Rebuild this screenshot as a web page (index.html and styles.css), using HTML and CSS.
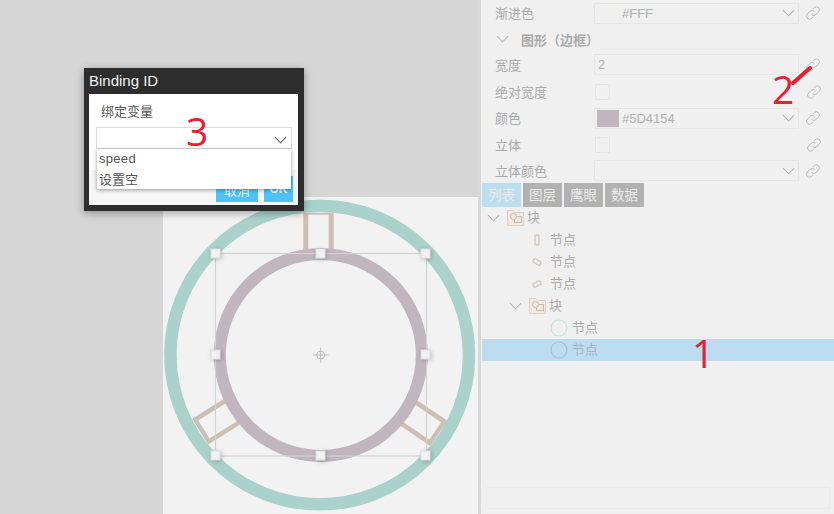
FILE: index.html
```html
<!DOCTYPE html>
<html lang="zh">
<head>
<meta charset="utf-8">
<title>Binding ID</title>
<link rel="stylesheet" href="styles.css">
</head>
<body>
<svg class="defs" width="0" height="0" aria-hidden="true">
  <symbol id="chain" viewBox="0 0 16 16"><path d="M6.6 9.6a3 3 0 0 0 4.300 0l2.600-2.600a3 3 0 0 0-4.300-4.300L8 3.900M9.400 6.400a3 3 0 0 0-4.300 0L2.500 9a3 3 0 0 0 4.300 4.300L8 12.100" fill="none" stroke="currentColor" stroke-width="1"/></symbol>
  <symbol id="chev" viewBox="0 0 14 8"><path d="M1 1l6 6 6-6" fill="none" stroke="currentColor" stroke-width="1.100"/></symbol>
  <symbol id="folder" viewBox="0 0 17 16"><path d="M.5.5h6l2 2h8v13H.5z" fill="#f1e9e2" stroke="#ddd1c6"/><rect x="7.500" y="6.500" width="7" height="6" fill="none" stroke="#c9bdb2"/><circle cx="6.500" cy="6.500" r="3" fill="#f1e9e2" stroke="#c9bdb2"/></symbol>
</svg>
<main class="app">
  <section class="stage">
    <div class="canvas">
      <svg class="drawing" width="315" height="317" viewBox="0 0 315 317">
        <g fill="#cdbfb3">
          <path d="M140.300 70V15.700h30.400V70h-5V17.700h-20.400V70z"/>
          <path d="M140.300 70V15.700h30.400V70h-4.600V20h-21.200V70z" transform="rotate(124 157 158)"/>
          <path d="M140.300 70V15.700h30.400V70h-4.600V20h-21.200V70z" transform="rotate(-122 157 158)"/>
        </g>
        <circle cx="156.700" cy="158" r="149.300" fill="none" stroke="#aad1cb" stroke-width="12.500"/>
        <circle cx="157.800" cy="158" r="101" fill="#f2f2f2" stroke="#c1b6bd" stroke-width="12"/>
        <rect x="52.500" y="56.500" width="211" height="202.500" fill="none" stroke="#d3d3d3" stroke-width="1.200"/>
        <g class="handles" fill="#f1f1f1" stroke="#dedede">
          <rect x="48" y="52" width="9" height="9"/>
          <rect x="153" y="52" width="9" height="9"/>
          <rect x="258" y="52" width="9" height="9"/>
          <rect x="48" y="153" width="9" height="9"/>
          <rect x="258" y="153" width="9" height="9"/>
          <rect x="48" y="254" width="9" height="9"/>
          <rect x="153" y="254" width="9" height="9"/>
          <rect x="258" y="254" width="9" height="9"/>
        </g>
        <g fill="none" stroke="#b9b9b9">
          <circle cx="157.700" cy="158" r="4"/>
          <path d="M150 158h15.500M157.700 150.500v15"/>
        </g>
      </svg>
    </div>

    <div class="dialog">
      <h2 class="dialog-title">Binding ID</h2>
      <div class="dialog-body">
        <div class="dialog-main">
          <div class="dialog-label">绑定变量</div>
          <div class="dialog-select"><svg class="chev-dark" width="13" height="8"><use href="#chev"/></svg></div>
        </div>
        <div class="dialog-foot">
          <button class="btn btn-cancel">取消</button>
          <button class="btn btn-ok">OK</button>
        </div>
        <ul class="dropdown">
          <li>speed</li>
          <li>设置空</li>
        </ul>
      </div>
    </div>
    <span class="mark mark-3">3</span>
  </section>

  <aside class="panel">
    <div class="props">
      <div class="row">
        <label>渐进色</label>
        <div class="field"><span class="swatch"></span><span>#FFF</span><svg class="chev" width="13" height="8"><use href="#chev"/></svg></div>
        <svg class="chain" width="16" height="16"><use href="#chain"/></svg>
      </div>
      <div class="row section">
        <svg class="chev" width="13" height="8"><use href="#chev"/></svg>
        <strong>图形（边框）</strong>
      </div>
      <div class="row row-width">
        <label>宽度</label>
        <div class="field field-text">2</div>
        <svg class="chain" width="16" height="16"><use href="#chain"/></svg>
      </div>
      <div class="row">
        <label>绝对宽度</label>
        <div class="check"></div>
        <svg class="chain" width="16" height="16"><use href="#chain"/></svg>
      </div>
      <div class="row">
        <label>颜色</label>
        <div class="field"><span class="swatch swatch-fill"></span><span>#5D4154</span><svg class="chev" width="13" height="8"><use href="#chev"/></svg></div>
        <svg class="chain" width="16" height="16"><use href="#chain"/></svg>
      </div>
      <div class="row">
        <label>立体</label>
        <div class="check"></div>
        <svg class="chain" width="16" height="16"><use href="#chain"/></svg>
      </div>
      <div class="row">
        <label>立体颜色</label>
        <div class="field"><svg class="chev" width="13" height="8"><use href="#chev"/></svg></div>
        <svg class="chain" width="16" height="16"><use href="#chain"/></svg>
      </div>
    </div>

    <nav class="tabs">
      <span class="tab tab-active">列表</span>
      <span class="tab">图层</span>
      <span class="tab">鹰眼</span>
      <span class="tab">数据</span>
    </nav>

    <ul class="tree">
      <li class="node lvl0"><svg class="chev tw" width="13" height="8"><use href="#chev"/></svg><svg class="fold" width="17" height="16"><use href="#folder"/></svg><span>块</span></li>
      <li class="node lvl1"><svg class="glyph" width="16" height="16" viewBox="0 0 16 16"><rect x="6" y="3" width="4" height="10" rx="1" fill="none" stroke="#d2c3b6" stroke-width="1.300"/></svg><span>节点</span></li>
      <li class="node lvl1"><svg class="glyph" width="16" height="16" viewBox="0 0 16 16"><rect x="6" y="4" width="4" height="8" rx="1" transform="rotate(-60 8 8)" fill="none" stroke="#d2c3b6" stroke-width="1.300"/></svg><span>节点</span></li>
      <li class="node lvl1"><svg class="glyph" width="16" height="16" viewBox="0 0 16 16"><rect x="6" y="4" width="4" height="8" rx="1" transform="rotate(60 8 8)" fill="none" stroke="#d2c3b6" stroke-width="1.300"/></svg><span>节点</span></li>
      <li class="node lvl2"><svg class="chev tw" width="13" height="8"><use href="#chev"/></svg><svg class="fold" width="17" height="16"><use href="#folder"/></svg><span>块</span></li>
      <li class="node lvl3"><svg class="ring" width="18" height="18" viewBox="0 0 18 18"><circle cx="9" cy="9" r="8" fill="none" stroke="#c8e2dc" stroke-width="1.200"/></svg><span>节点</span></li>
      <li class="node lvl3 node-selected"><svg class="ring" width="18" height="18" viewBox="0 0 18 18"><circle cx="9" cy="9" r="8" fill="none" stroke="#b4bdc6" stroke-width="1.200"/></svg><span>节点</span></li>
    </ul>

    <div class="search"></div>

    <span class="mark mark-1">1</span>
    <span class="mark mark-2">2</span>
    <svg class="pen" width="22" height="20" viewBox="0 0 22 20"><path d="M2 18L19 3" stroke="#ec1c2e" stroke-width="4" stroke-linecap="round"/></svg>
  </aside>
</main>
</body>
</html>
```
FILE: styles.css
```css
* { box-sizing: border-box; }
html, body { margin: 0; padding: 0; height: 514px; overflow: hidden; }
body { font-family: "Noto Sans CJK SC", "Liberation Sans", sans-serif; font-size: 13px; color: #aaa; background: #f0f0f0; }
.defs { position: absolute; }
ul { list-style: none; margin: 0; padding: 0; }

.app { display: flex; height: 514px; }

/* stage */
.stage { position: relative; width: 478px; background: #d6d6d6; padding: 197px 0 0 163px; flex: none; }
.canvas { width: 315px; height: 317px; background: #f2f2f2; }
.drawing { display: block; }
.handles { filter: drop-shadow(1px 1px 2px rgba(0,0,0,.22)); }

/* dialog */
.dialog { position: absolute; left: 84px; top: 68px; width: 220px; height: 143px; background: #2d2d2d; padding: 0 6px 6px 5px; display: flex; flex-direction: column; box-shadow: 0 2px 8px rgba(0,0,0,.35); }
.dialog-title { margin: 0; font: 400 15px/26px "Liberation Sans", sans-serif; color: #f2f2f2; flex: none; }
.dialog-body { position: relative; flex: 1; background: #f6f6f6; display: flex; flex-direction: column; }
.dialog-main { background: #fff; height: 76px; padding: 8px 6px 0 7px; }
.dialog-label { padding-left: 5px; font-size: 13px; line-height: 17px; color: #555; }
.dialog-select { margin-top: 8px; height: 22px; border: 1px solid #dcdcdc; background: #fff; display: flex; justify-content: flex-end; align-items: center; padding-right: 4px; }
.chev-dark { color: #555; margin-top: 3px; }
.dialog-foot { display: flex; justify-content: flex-end; gap: 6px; padding: 6px 5px 0 0; }
.btn { border: 0; height: 26px; padding: 0; background: #4fc3f7; color: #e9f7fe; font: 13px "Noto Sans CJK SC", "Liberation Sans", sans-serif; }
.btn-cancel { width: 42px; }
.btn-ok { width: 29px; font: 700 12px "Liberation Sans", sans-serif; }
.dropdown { position: absolute; left: 8px; top: 55px; width: 194px; height: 40px; background: #fff; box-shadow: 0 1px 4px rgba(0,0,0,.4); padding: 0 2px; font: 13px/19px "Noto Sans CJK SC", "Liberation Sans", sans-serif; color: #555; }
.dropdown li { height: 20px; line-height: 20px; }
.dropdown li:first-child { font-family: "Liberation Sans", sans-serif; letter-spacing: .3px; }

/* marks */
.mark { position: absolute; font: 400 39px/38px "Open Sans", sans-serif; color: #ee1c30; }
.mark-3 { left: 186px; top: 112px; }
.mark-1 { left: 211px; top: 334px; }
.mark-2 { left: 291px; top: 70px; }
.pen { position: absolute; left: 310px; top: 65px; }

/* panel */
.panel { position: relative; flex: 1; border-left: 3px solid #d8d8d8; background: #f0f0f0; height: 514px; }
.props { height: 183px; }
.row { display: flex; align-items: center; height: 26.300px; padding-left: 14px; }
.row-width { margin-top: -1.600px; height: 27.900px; }
.row label { width: 99px; flex: none; line-height: 16px; }
.field { width: 205px; height: 21px; border: 1px solid #e6e6e6; display: flex; align-items: center; padding-left: 2px; font: 13px "Liberation Sans", sans-serif; color: #b0b0b0; flex: none; }
.field-text { padding-left: 3px; }
.swatch { width: 22px; height: 17px; margin-right: 3px; flex: none; }
.swatch-fill { background: #c0b5bc; }
.chev { color: #b5b5b5; flex: none; }
.field .chev { margin-left: auto; margin-right: 3px; }
.chain { color: #b9b9b9; margin-left: 6px; flex: none; }
.check { width: 15px; height: 16px; border: 1px solid #e6e6e6; margin: 0 190px 0 1px; flex: none; }
.section { gap: 12px; padding-left: 15px; }
.section strong { font-weight: 700; font-size: 13px; color: #aaa; text-spacing-trim: space-all; }

.tabs { display: flex; gap: 2px; padding-left: 1px; height: 24px; }
.tab { width: 39px; height: 24px; line-height: 22px; text-align: center; background: #b2b2b2; color: #eaeaea; font-size: 13.500px; }
.tab-active { background: #bcdff0; }

.tree { height: 154px; }
.node { display: flex; align-items: center; height: 22px; gap: 5px; padding-left: 1px; }
.node span { padding-bottom: 3px; }
.lvl0 { padding-left: 6px; }
.lvl1 { padding-left: 48px; gap: 5px; }
.lvl2 { padding-left: 28px; }
.lvl3 { padding-left: 69px; gap: 4px; }
.tw { margin-right: 2px; }
.fold { margin-right: -2px; }
.node-selected { background: #bcddf0; margin-left: 1px; padding-left: 68px; color: #a8b4bc; }

.search { margin: 126px 4px 0 5px; height: 22px; border: 1px solid #ebebeb; width: 344px; }
```
